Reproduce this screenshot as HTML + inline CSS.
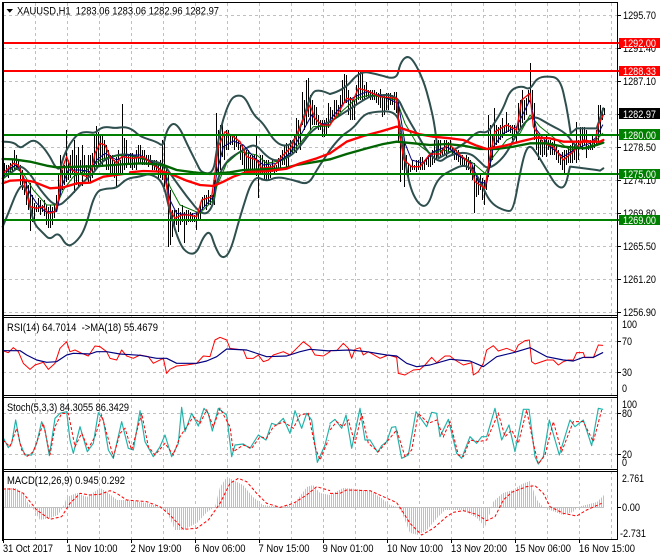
<!DOCTYPE html>
<html><head><meta charset="utf-8"><style>
html,body{margin:0;padding:0;background:#fff}
svg{display:block}
text{font-family:"Liberation Sans",sans-serif;font-size:11px;fill:#000}
.l{fill:none;stroke-linejoin:round;stroke-linecap:round}
</style></head><body>
<svg width="660" height="560" viewBox="0 0 660 560" xmlns="http://www.w3.org/2000/svg">
<defs><pattern id="hs" patternUnits="userSpaceOnUse" x="3" y="0" width="2" height="4"><rect x="0" y="0" width="1" height="4" fill="#c0c0c0"/></pattern></defs>
<rect width="660" height="560" fill="#fff"/>
<!-- grid -->
<g stroke="#c0c0c0" stroke-width="1" stroke-dasharray="3 3" shape-rendering="crispEdges" fill="none">
<path d="M35.5 3V539M67.5 3V539M99.5 3V539M131.5 3V539M163.5 3V539M195.5 3V539M227.5 3V539M259.5 3V539M291.5 3V539M323.5 3V539M355.5 3V539M387.5 3V539M419.5 3V539M451.5 3V539M483.5 3V539M515.5 3V539M547.5 3V539M579.5 3V539M611.5 3V539"/>
<path d="M3 15.5H617M3 48.5H617M3 81.5H617M3 114.5H617M3 147.5H617M3 180.5H617M3 213.5H617M3 246.5H617M3 279.5H617M3 312.5H617M3 341.5H617M3 372.5H617M3 413.5H617M3 454.5H617"/>
</g>
<!-- macd hist -->
<path fill="url(#hs)" d="M3 507V488L16 488L23 493L28 503L32 507L35 512L40 520L50 518L58 515L63 507L67 497L77 493L87 497L100 488L107 492L117 500L127 500L147 503L160 507L167 512L175 530L183 530L197 523L207 512L215 507L220 487L227 477L233 480L243 485L253 497L263 505L280 507L293 505L307 487L313 485L320 493L330 495L343 488L357 489L370 491L380 497L390 505L398 507L402 513L410 533L418 535L427 530L437 518L445 510L463 510L477 518L485 527L490 513L493 502L503 493L513 490L522 484L530 481L537 500L543 507L550 510L563 515L573 512L578 507L597 502L604 495V507Z"/>
<path stroke="#c0c0c0" stroke-width="1" shape-rendering="crispEdges" d="M3 507.5H604"/>
<!-- bars -->
<g transform="translate(.5 0)" shape-rendering="crispEdges"><path fill="none" stroke="#000" stroke-width="1" d="M4 163V178M6 165V175M8 165V178M10 163V175M12 160V172M14 150V170M16 155V170M18 160V168M20 165V185M22 170V190M24 180V195M26 180V205M28 185V210M30 183V231M32 195V222M34 203V222M36 205V212M38 198V212M40 200V215M42 205V212M44 200V216M46 205V225M48 207V228M50 205V228M52 207V225M54 205V218M56 195V212M58 175V205M60 155V195M62 170V190M64 165V185M66 130V182M68 160V180M70 155V178M72 150V175M74 140V193M76 155V185M78 147V187M80 160V175M82 145V186M84 155V175M86 165V180M88 155V182M90 155V182M92 153V178M94 135V170M96 126V167M98 132V165M100 135V165M102 135V165M104 140V160M106 145V170M108 150V170M110 155V175M112 155V175M114 160V178M116 157V187M118 150V173M120 160V173M122 104V175M124 138V170M126 140V168M128 155V165M130 153V168M132 153V170M134 155V168M136 150V170M138 145V163M140 145V163M142 150V165M144 150V165M146 155V165M148 155V167M150 155V165M152 160V170M154 160V170M156 160V172M158 165V180M160 160V178M162 140V180M164 137V187M166 165V187M168 170V247M170 190V245M172 210V237M174 210V230M176 210V225M178 208V232M180 212V225M182 205V222M184 212V243M186 210V225M188 210V222M190 212V222M192 213V222M194 215V222M196 213V230M198 210V220M200 205V220M202 197V210M204 195V207M206 195V210M208 190V205M210 195V205M212 195V205M214 180V205M216 113V175M218 130V173M220 125V170M222 120V157M224 135V160M226 130V150M228 130V150M230 135V145M232 135V145M234 135V150M236 135V147M238 140V150M240 145V160M242 145V165M244 150V172M246 150V172M248 150V170M250 155V172M252 155V172M254 155V175M256 135V176M258 160V198M260 155V175M262 155V175M264 160V180M266 160V180M268 160V180M270 165V178M272 160V172M274 165V173M276 165V172M278 158V168M280 155V170M282 150V165M284 145V165M286 143V167M288 145V166M290 140V155M292 140V155M294 135V153M296 118V153M298 120V145M300 125V150M302 92V125M304 100V130M306 80V125M308 78V117M310 95V130M312 100V125M314 105V125M316 107V125M318 115V130M320 120V130M322 120V137M324 120V137M326 118V135M328 103V128M330 107V123M332 110V120M334 100V117M336 100V115M338 105V117M340 95V112M342 80V105M344 74V103M346 75V103M348 90V115M350 97V120M352 100V120M354 100V120M356 85V105M358 72V100M360 72V100M362 71V100M364 85V100M366 82V97M368 90V97M370 90V100M372 90V100M374 90V100M376 92V103M378 93V105M380 89V108M382 95V117M384 95V115M386 93V110M388 93V110M390 93V105M392 95V105M394 92V110M396 92V113M398 100V143M400 133V182M402 140V170M404 143V187M406 155V175M408 163V180M410 165V172M412 160V170M414 165V170M416 160V172M418 160V170M420 157V170M422 157V170M424 160V170M426 158V165M428 155V167M430 153V167M432 150V165M434 140V163M436 145V160M438 140V157M440 140V157M442 148V155M444 140V155M446 140V157M448 142V153M450 140V150M452 148V155M454 150V160M456 150V160M458 150V162M460 155V165M462 155V165M464 158V165M466 155V170M468 157V170M470 160V175M472 165V180M474 163V213M476 178V197M478 180V195M480 175V190M482 178V200M484 180V205M486 178V190M488 115V177M490 125V167M492 135V160M494 108V150M496 125V145M498 127V143M500 125V140M502 118V138M504 125V135M506 112V133M508 123V132M510 125V133M512 125V140M514 125V140M516 127V143M518 103V130M520 100V130M522 90V123M524 100V120M526 98V115M528 90V103M530 63V103M532 90V110M534 103V140M536 130V150M538 135V160M540 140V155M542 140V157M544 140V155M546 135V157M548 140V150M550 140V155M552 142V155M554 140V155M556 145V160M558 150V163M560 155V165M562 152V170M564 150V173M566 150V165M568 148V163M570 145V163M572 143V163M574 145V160M576 122V163M578 140V160M580 127V147M582 127V150M584 127V145M586 130V158M588 145V150M590 140V150M592 135V150M594 140V148M596 130V145M598 105V143M600 105V135M602 108V120M604 108V115"/></g>
<!-- main pane left -->
<g transform="scale(.33333)" class="l">
<path class="l" stroke="#2f4f4f" stroke-width="6" d="M8 425 Q40 425 50 435 Q60 445 67.5 440 Q75 435 87.5 426.5 Q100 418 112.5 426.5 Q125 435 137.5 452.5 Q150 470 157.5 485 Q165 500 172.5 505 Q180 510 185 490 Q190 470 200 450 Q210 430 222.5 415 Q235 400 247.5 397.5 Q260 395 272.5 397.5 Q285 400 292.5 392.5 Q300 385 310 382.5 Q320 380 332.5 382.5 Q345 385 360 382.5 Q375 380 387.5 385 Q400 390 410 400 Q420 410 445 417.5 Q470 425 480 432.5 Q490 440 495 415 Q500 390 510 378.5 Q520 367 530 376 Q540 385 550 407.5 Q560 430 575 460 Q590 490 597.5 505 Q605 520 622.5 520 Q640 520 645 485 Q650 450 657.5 410 Q665 370 677.5 335 Q690 300 700 292.5 Q710 285 722.5 287.5 Q735 290 747.5 317.5 Q760 345 775 357.5 Q790 370 805 395 Q820 420 835 430 Q850 440 865 435 Q880 430 895 395 Q910 360 922.5 317.5 Q935 275 947.5 272.5 Q960 270 975 276 L990 282"/>
<path class="l" stroke="#2f4f4f" stroke-width="6" d="M8 680 Q25 640 37.5 607.5 Q50 575 60 562.5 Q70 550 77.5 570 Q85 590 92.5 630 Q100 670 115 685 Q130 700 140 710 Q150 720 162.5 707.5 Q175 695 187.5 717.5 Q200 740 212.5 735 Q225 730 240 710 Q255 690 270 632.5 Q285 575 302.5 570 Q320 565 335 565 Q350 565 365 550 Q380 535 400 532.5 Q420 530 435 525 Q450 520 470 532.5 Q490 545 500 592.5 Q510 640 525 687.5 Q540 735 552.5 748.5 Q565 762 577.5 761 Q590 760 600 735 Q610 710 620 701 Q630 692 637.5 716 Q645 740 655 758.5 Q665 777 677.5 768.5 Q690 760 705 705 Q720 650 740 587.5 Q760 525 780 535 Q800 545 815 537.5 Q830 530 855 535 Q880 540 902.5 547.5 Q925 555 937.5 532.5 Q950 510 970 480 L990 450"/>
<path class="l" stroke="#2f4f4f" stroke-width="6" d="M8 535 Q40 515 50 505 Q60 495 75 507.5 Q90 520 105 545 Q120 570 145 597.5 Q170 625 190 607.5 Q210 590 230 567.5 Q250 545 265 532.5 Q280 520 290 505 Q300 490 315 480 Q330 470 355 465 Q380 460 410 470 Q440 480 465 485 Q490 490 500 505 Q510 520 535 555 Q560 590 585 620 Q610 650 625 635 Q640 620 645 580 Q650 540 665 510 Q680 480 705 465 Q730 450 747.5 440 Q765 430 782.5 450 Q800 470 815 477.5 Q830 485 850 477.5 Q870 470 885 455 Q900 440 920 412.5 Q940 385 965 375 L990 365"/>
<polyline class="l" stroke="#007000" stroke-width="3" points="8,540 40,500 70,520 100,570 140,615 170,615 190,570 220,530 260,510 300,480 330,470 380,465 440,480 490,500 510,560 540,615 600,640 640,600 650,560 680,490 720,455 770,465 800,490 850,480 900,430 940,380 990,378"/>
<polyline class="l" stroke="#000080" stroke-width="3" points="8,530 30,505 50,495 70,530 90,580 110,610 135,635 170,635 185,560 205,510 240,510 270,515 290,480 315,460 350,480 380,465 420,465 460,490 495,520 510,600 530,640 570,645 600,635 640,590 650,520 670,440 700,423 730,435 760,470 790,495 830,490 870,460 900,410 935,345 960,370 990,375"/>
<polyline class="l" stroke="#f00" stroke-width="4" points="8,520 20,510 40,490 55,495 65,520 80,580 90,620 110,625 130,620 145,640 165,635 175,600 185,510 200,470 215,510 235,520 260,530 275,510 285,460 300,430 315,435 330,470 350,490 365,470 400,475 430,470 460,495 490,515 500,560 510,630 525,655 545,645 565,645 590,650 605,600 635,590 645,520 655,440 675,395 700,410 720,425 740,470 770,480 785,505 820,500 850,465 875,440 900,380 930,315 945,355 965,375 990,375"/>
<polyline class="l" stroke="#006400" stroke-width="7" points="8,477 40,478 90,485 140,497 170,502 240,500 300,498 380,492 430,490 490,495 530,510 580,517 630,522 690,517 730,510 790,508 850,505 890,495 950,485 990,478"/>
<polyline class="l" stroke="#f00" stroke-width="7" points="8,550 30,542 70,540 100,545 150,565 190,562 230,550 270,548 310,530 370,522"/>
<polyline class="l" stroke="#f00" stroke-width="7" points="390,517 430,513 490,515 520,525 560,542 600,555 640,558 670,545 700,530 740,516 800,514 860,506 900,490 950,475 990,460"/>
</g>
<!-- main pane right -->
<g transform="translate(330 0) scale(.33333)" class="l">
<path class="l" stroke="#2f4f4f" stroke-width="6" d="M0 282 Q40 272 65 242.5 Q90 213 115 217.5 Q140 222 170 231 Q200 240 205 215 Q210 190 220 178.5 Q230 167 240 173.5 Q250 180 265 210 Q280 240 290 275 Q300 310 307.5 345 Q315 380 320 427.5 L325 475 L380 445 L410 425 Q440 392 455 396 Q470 400 480 387.5 Q490 375 505 350 Q520 325 530 297.5 Q540 270 557.5 263.5 Q575 257 587.5 263.5 Q600 270 610 252.5 Q620 235 635 231.5 Q650 228 670 231.5 Q690 235 700 277.5 Q710 320 716 360 L722 400 L740 385 L800 385 L820 325"/>
<path class="l" stroke="#2f4f4f" stroke-width="6" d="M0 450 Q30 410 50 397.5 Q70 385 85 365 Q100 345 115 340 Q130 335 165 334 Q200 333 207.5 366.5 Q215 400 225 475 Q235 550 250 582.5 Q265 615 280 617.5 Q295 620 307.5 577.5 Q320 535 347.5 520 Q375 505 387.5 500 Q400 495 412.5 500 Q425 505 437.5 522.5 Q450 540 465 575 Q480 610 505 622.5 Q530 635 540 632.5 Q550 630 560 575 Q570 520 577.5 487.5 Q585 455 592.5 445 Q600 435 610 447.5 Q620 460 635 485 Q650 510 665 535 Q680 560 692.5 562.5 Q705 565 712.5 532.5 L720 500 L740 502 L800 510 L810 512 L820 505"/>
<path class="l" stroke="#2f4f4f" stroke-width="6" d="M0 365 Q40 340 70 320 Q100 300 115 292.5 Q130 285 165 285 Q200 285 212.5 312.5 Q225 340 242.5 370 Q260 400 277.5 430 Q295 460 312.5 474 Q330 488 340 479 Q350 470 370 463.5 Q390 457 407.5 459.5 Q425 462 437.5 473.5 Q450 485 462.5 497.5 Q475 510 500 490 Q525 470 542.5 435 Q560 400 582.5 371 Q605 342 632.5 358.5 Q660 375 685 387.5 Q710 400 725 422.5 Q740 445 765 445 Q790 445 820 420"/>
<polyline class="l" stroke="#007000" stroke-width="3" points="0,372 40,330 80,295 120,285 200,300 225,370 260,430 300,460 340,450 380,460 430,490 465,520 490,470 530,420 570,400 600,345 630,380 680,420 720,450 780,440 818,400"/>
<polyline class="l" stroke="#000080" stroke-width="3" points="0,360 40,310 75,290 110,275 160,290 205,310 225,430 245,480 280,490 310,455 350,440 390,470 425,490 445,545 470,550 490,440 520,400 560,380 600,300 620,390 660,440 700,470 740,445 780,430 800,410 818,375"/>
<polyline class="l" stroke="#f00" stroke-width="4" points="0,375 30,330 50,295 70,300 85,265 110,272 150,290 200,295 208,400 222,480 245,500 270,500 300,462 330,462 355,430 385,460 420,490 435,545 465,565 478,480 495,395 530,375 560,390 575,300 600,280 610,380 640,430 670,440 700,480 730,455 760,420 795,425 805,375 820,345"/>
<polyline class="l" stroke="#006400" stroke-width="7" points="0,478 50,462 110,445 160,432 200,425 250,430 300,435 350,432 400,437 450,447 500,447 550,440 600,430 650,430 700,440 760,445 800,435 820,428"/>
<polyline class="l" stroke="#f00" stroke-width="7" points="0,460 50,425 100,408 150,395 200,380 230,390 270,403 310,410 360,415 400,420 440,437 470,447 520,438 570,425 620,413 660,415 700,425 760,425 810,425 820,420"/>
</g>
<!-- levels -->
<g shape-rendering="crispEdges" stroke-width="2" fill="none">
<path stroke="#f00" d="M3 43H620M3 71H620"/>
<path stroke="#008000" d="M3 135H620M3 174H620M3 220H620"/>
</g>
<!-- RSI -->
<g transform="translate(0 280) scale(.33333)">
<polyline class="l" stroke="#f00" stroke-width="3" points="8,212 25,218 40,203 55,215 70,250 90,268 105,255 130,247 145,268 165,250 180,205 200,185 210,215 225,210 245,220 265,228 285,198 300,200 320,215 330,235 350,240 365,210 380,228 400,235 420,225 445,230 460,250 490,235 500,280 510,268 530,258 560,255 590,250 610,228 630,230 645,180 660,172 680,180 690,205 730,210 740,235 760,235 775,225 790,245 805,240 820,225 850,215 870,225 890,205 910,185 930,200 945,225 970,228 990,215"/>
<polyline class="l" stroke="#000080" stroke-width="3.5" points="8,212 60,212 80,225 110,240 140,247 170,245 200,225 220,220 270,222 290,215 320,215 360,222 420,226 470,235 500,235 530,250 590,250 620,243 650,230 680,207 740,210 800,230 860,228 900,215 930,208 990,213"/>
<!-- stoch -->
<polyline class="l" stroke="#20b2aa" stroke-width="3.5" points="8,470 25,503 35,490 47,420 60,490 75,525 95,525 110,490 125,425 135,450 148,527 165,415 180,400 200,395 210,480 220,520 240,440 262,515 280,490 295,398 310,420 325,510 340,535 365,425 385,505 400,510 420,392 435,485 460,530 480,500 495,465 515,530 535,490 545,382 555,455 575,400 595,438 612,385 625,400 637,453 655,385 680,405 695,530 705,495 730,492 750,505 775,465 798,480 815,430 830,435 850,415 870,460 885,392 905,445 920,400 935,420 952,547 975,495 990,435"/>
<polyline fill="none" stroke="#f00" stroke-width="3" stroke-dasharray="9 6" points="8,480 30,500 50,445 65,510 80,530 100,515 130,430 150,525 165,440 185,400 205,400 225,500 245,460 265,505 285,470 305,405 320,460 340,530 360,460 375,445 395,510 425,400 445,500 465,525 495,490 520,525 540,470 560,440 580,410 600,430 620,390 640,440 660,385 690,440 700,515 730,495 755,505 780,470 800,475 820,440 850,425 880,445 900,405 925,400 945,500 960,540 985,480"/>
<!-- macd signal -->
<polyline fill="none" stroke="#f00" stroke-width="3" stroke-dasharray="9 6" points="8,627 40,627 70,640 90,665 110,690 150,718 185,710 210,670 240,640 270,645 300,643 330,632 350,640 380,660 440,665 480,680 510,705 550,748 590,745 625,720 660,670 690,610 715,595 740,605 770,640 800,670 840,682 880,670 920,645 950,620 990,632"/>
</g>
<g transform="translate(330 280) scale(.33333)">
<polyline class="l" stroke="#f00" stroke-width="3" points="0,212 20,212 40,190 55,205 65,235 75,208 90,203 100,225 115,215 150,235 175,225 200,232 205,280 225,285 250,270 270,268 285,255 305,232 320,248 345,228 360,228 375,240 400,255 425,248 430,285 445,275 460,250 470,210 490,197 505,213 530,205 555,215 565,195 585,182 598,180 605,245 615,252 650,240 670,240 685,255 700,245 715,240 730,240 740,218 760,218 765,233 790,233 805,195 818,196"/>
<polyline class="l" stroke="#000080" stroke-width="3.5" points="0,212 60,210 110,215 170,225 200,228 230,250 260,260 300,255 360,238 420,243 460,260 500,230 550,218 600,203 650,230 700,240 730,243 760,232 790,232 818,218"/>
<polyline class="l" stroke="#20b2aa" stroke-width="3.5" points="0,430 15,418 35,445 48,405 65,505 90,385 105,480 120,480 143,517 155,497 170,485 185,442 197,440 215,535 235,525 258,395 290,440 305,397 320,400 330,470 355,418 380,520 395,535 420,470 440,490 455,470 470,470 495,385 515,480 537,435 555,515 580,388 597,388 615,530 625,552 640,530 658,420 688,525 720,420 735,440 760,420 785,497 805,385 818,388"/>
<polyline fill="none" stroke="#f00" stroke-width="3" stroke-dasharray="9 6" points="0,450 20,425 40,440 55,420 75,490 95,400 115,490 145,515 175,480 200,450 225,530 245,510 265,400 295,430 320,420 340,470 360,425 385,525 400,530 420,480 445,485 470,480 505,400 525,470 545,450 565,490 590,390 610,490 625,552 645,525 670,425 695,515 730,425 760,425 790,485 815,390"/>
<polyline fill="none" stroke="#f00" stroke-width="3" stroke-dasharray="9 6" points="0,640 30,640 50,630 120,632 160,650 200,668 215,690 240,730 275,765 310,745 350,710 370,697 400,692 440,703 470,722 495,710 520,660 545,637 590,620 615,617 640,640 660,680 700,700 740,708 770,690 815,670"/>
</g>
<!-- frames -->
<g fill="none" stroke="#000" shape-rendering="crispEdges" stroke-width="1">
<path stroke-width="2" d="M3 2V541"/>
<path stroke-width="1" d="M2 2.5H618M2 315.5H618M2 317.5H618M2 395.5H618M2 397.5H618M2 469.5H618M2 471.5H618M2 539.5H618"/>
<path stroke-width="1" d="M617.5 2V540"/>
<path d="M618 15.5h3M618 48.5h3M618 81.5h3M618 114.5h3M618 147.5h3M618 180.5h3M618 213.5h3M618 246.5h3M618 279.5h3M618 312.5h3M618 341.5h3M618 372.5h3M618 413.5h3M618 454.5h3M618 507.5h3"/>
<path d="M3.5 540v3M67.5 540v3M131.5 540v3M195.5 540v3M259.5 540v3M323.5 540v3M387.5 540v3M451.5 540v3M515.5 540v3M579.5 540v3"/>
</g>
<polygon points="6.5,9 13,9 9.75,12.8" fill="#000"/>
<!-- titles -->
<text x="17" y="14.5" textLength="202" lengthAdjust="spacingAndGlyphs" xml:space="preserve">XAUUSD,H1  1283.06 1283.06 1282.96 1282.97</text>
<text x="7" y="331" textLength="151" lengthAdjust="spacingAndGlyphs" xml:space="preserve">RSI(14) 64.7014  -&gt;MA(18) 55.4679</text>
<text x="7" y="411" textLength="122" lengthAdjust="spacingAndGlyphs">Stoch(5,3,3) 84.3055 86.3429</text>
<text x="7" y="484" textLength="118" lengthAdjust="spacingAndGlyphs">MACD(12,26,9) 0.945 0.292</text>
<!-- right axis labels -->
<g>
<text x="623" y="19" textLength="33" lengthAdjust="spacingAndGlyphs">1295.70</text>
<text x="623" y="52" textLength="33" lengthAdjust="spacingAndGlyphs">1291.40</text>
<text x="623" y="85" textLength="33" lengthAdjust="spacingAndGlyphs">1287.10</text>
<text x="623" y="151" textLength="33" lengthAdjust="spacingAndGlyphs">1278.50</text>
<text x="623" y="184" textLength="33" lengthAdjust="spacingAndGlyphs">1274.10</text>
<text x="623" y="217" textLength="33" lengthAdjust="spacingAndGlyphs">1269.80</text>
<text x="623" y="250" textLength="33" lengthAdjust="spacingAndGlyphs">1265.50</text>
<text x="623" y="283" textLength="33" lengthAdjust="spacingAndGlyphs">1261.20</text>
<text x="623" y="316" textLength="33" lengthAdjust="spacingAndGlyphs">1256.90</text>
<text x="622" y="328" textLength="15" lengthAdjust="spacingAndGlyphs">100</text>
<text x="622" y="345" textLength="10" lengthAdjust="spacingAndGlyphs">70</text>
<text x="622" y="376" textLength="10" lengthAdjust="spacingAndGlyphs">30</text>
<text x="622" y="392" textLength="5" lengthAdjust="spacingAndGlyphs">0</text>
<text x="622" y="408" textLength="15" lengthAdjust="spacingAndGlyphs">100</text>
<text x="622" y="417" textLength="10" lengthAdjust="spacingAndGlyphs">80</text>
<text x="622" y="458" textLength="10" lengthAdjust="spacingAndGlyphs">20</text>
<text x="622" y="466" textLength="5" lengthAdjust="spacingAndGlyphs">0</text>
<text x="622" y="482" textLength="22" lengthAdjust="spacingAndGlyphs">2.761</text>
<text x="622" y="511" textLength="18" lengthAdjust="spacingAndGlyphs">0.00</text>
<text x="620" y="537" textLength="26" lengthAdjust="spacingAndGlyphs">-2.731</text>
</g>
<!-- price boxes -->
<g shape-rendering="crispEdges">
<rect x="619" y="38" width="41" height="10" fill="#f00"/>
<rect x="619" y="66" width="41" height="10" fill="#f00"/>
<rect x="619" y="108" width="41" height="11" fill="#000"/>
<rect x="619" y="129" width="41" height="11" fill="#008000"/>
<rect x="619" y="169" width="41" height="10" fill="#008000"/>
<rect x="619" y="215" width="41" height="10" fill="#008000"/>
</g>
<g style="fill:#fff">
<text x="623" y="47" style="fill:#fff" textLength="33" lengthAdjust="spacingAndGlyphs">1292.00</text>
<text x="623" y="75" style="fill:#fff" textLength="33" lengthAdjust="spacingAndGlyphs">1288.33</text>
<text x="623" y="118" style="fill:#fff" textLength="33" lengthAdjust="spacingAndGlyphs">1282.97</text>
<text x="623" y="139" style="fill:#fff" textLength="33" lengthAdjust="spacingAndGlyphs">1280.00</text>
<text x="623" y="178" style="fill:#fff" textLength="33" lengthAdjust="spacingAndGlyphs">1275.00</text>
<text x="623" y="224" style="fill:#fff" textLength="33" lengthAdjust="spacingAndGlyphs">1269.00</text>
</g>
<!-- date axis -->
<text x="3" y="552" textLength="50" lengthAdjust="spacingAndGlyphs">31 Oct 2017</text>
<text x="66.5" y="552" textLength="51" lengthAdjust="spacingAndGlyphs">1 Nov 10:00</text>
<text x="130.5" y="552" textLength="51" lengthAdjust="spacingAndGlyphs">2 Nov 19:00</text>
<text x="194.5" y="552" textLength="51" lengthAdjust="spacingAndGlyphs">6 Nov 06:00</text>
<text x="258.5" y="552" textLength="51" lengthAdjust="spacingAndGlyphs">7 Nov 15:00</text>
<text x="322.5" y="552" textLength="51" lengthAdjust="spacingAndGlyphs">9 Nov 01:00</text>
<text x="387" y="552" textLength="56" lengthAdjust="spacingAndGlyphs">10 Nov 10:00</text>
<text x="451" y="552" textLength="56" lengthAdjust="spacingAndGlyphs">13 Nov 20:00</text>
<text x="515" y="552" textLength="56" lengthAdjust="spacingAndGlyphs">15 Nov 06:00</text>
<text x="579" y="552" textLength="56" lengthAdjust="spacingAndGlyphs">16 Nov 15:00</text>
</svg>
</body></html>
